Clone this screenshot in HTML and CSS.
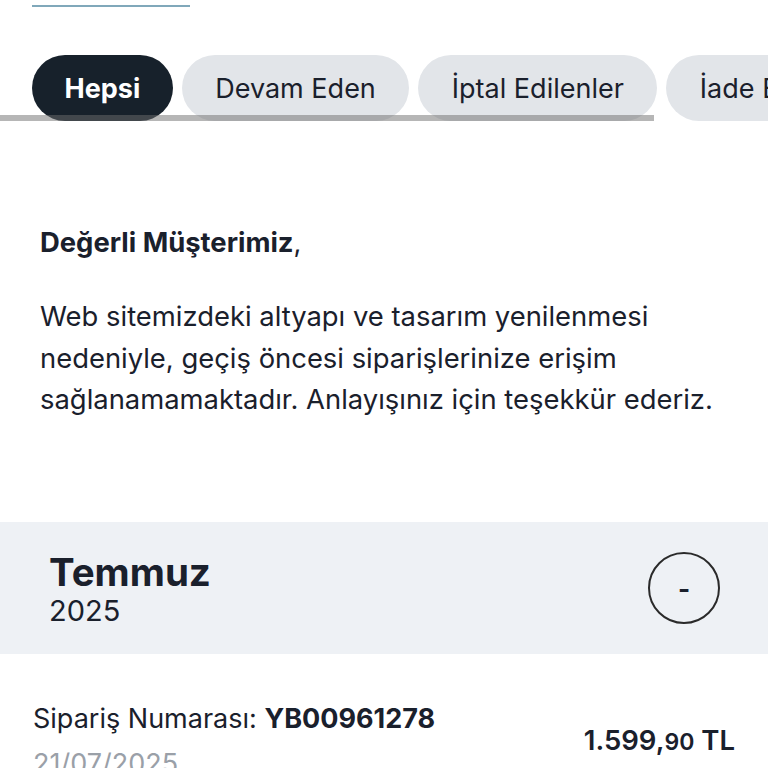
FILE: index.html
```html
<!DOCTYPE html>
<html lang="tr">
<head>
<meta charset="UTF-8">
<meta name="viewport" content="width=device-width, initial-scale=1.0">
<title>Siparişlerim</title>
<link rel="stylesheet" href="styles.css">
</head>
<body>

<div class="page">

 <div class="top-line"></div>

 <div class="tabs-wrap">
  <div class="tabs">
   <button class="tab tab-active">Hepsi</button>
   <button class="tab">Devam Eden</button>
   <button class="tab">İptal Edilenler</button>
   <button class="tab">İade Edilenler</button>
  </div>
  <div class="scroll-thumb"></div>
 </div>

 <div class="notice">
  <p class="notice-title"><b>Değerli Müşterimiz</b>,</p>
  <p class="notice-text">Web sitemizdeki altyapı ve tasarım yenilenmesi nedeniyle, geçiş öncesi siparişlerinize erişim sağlanamamaktadır. Anlayışınız için teşekkür ederiz.</p>
 </div>

 <div class="month">
  <div class="month-info">
   <div class="month-name">Temmuz</div>
   <div class="month-year">2025</div>
  </div>
  <button class="toggle">-</button>
 </div>

 <div class="order">
  <div class="order-info">
   <div class="order-no">Sipariş Numarası: <b>YB00961278</b></div>
   <div class="order-date">21/07/2025</div>
  </div>
  <div class="order-price">1.599,<span class="cents">90</span> TL</div>
 </div>

</div>

</body>
</html>
```

FILE: styles.css
```css
body, html {
 margin: 0;
 background-color: #fff;
 font-family: Inter, "Noto Sans", sans-serif;
 color: #1a202c;
 overflow: hidden;
}
.page {
 width: 768px;
 height: 768px;
 overflow: hidden;
}
.top-line {
 width: 158px;
 height: 2px;
 margin: 5px 0 0 32px;
 background-color: #80a8ba;
}
.tabs-wrap {
 position: relative;
 margin-top: 48px;
 overflow: hidden;
}
.tabs {
 display: flex;
 gap: 9px;
 padding-left: 32px;
 white-space: nowrap;
}
.tab {
 flex-shrink: 0;
 height: 66px;
 padding: 0 33.5px;
 border: none;
 border-radius: 33px;
 background-color: #e2e5e9;
 color: #1a202c;
 font-family: Inter, "Noto Sans", sans-serif;
 font-size: 27px;
}
.tab-active {
 background-color: #17212b;
 color: #fff;
 font-weight: 700;
 padding: 0 32.5px;
}
.scroll-thumb {
 position: absolute;
 left: 0;
 top: 60px;
 width: 654px;
 height: 7px;
 background-color: rgba(110, 110, 110, 0.5);
}
.notice {
 padding: 101px 40px 0 40px;
 height: 401px;
 box-sizing: border-box;
}
.notice p {
 margin: 0;
 font-size: 27.4px;
}
.notice-title {
 line-height: 40px;
}
.notice-text {
 margin-top: 34px !important;
 line-height: 41.5px;
 max-width: 690px;
}
.month {
 display: flex;
 justify-content: space-between;
 align-items: center;
 height: 132px;
 padding: 0 48px 0 49px;
 background-color: #eef1f5;
}
.month-info {
 padding-top: 2px;
}
.month-name {
 font-size: 38.5px;
 font-weight: 700;
 line-height: 44px;
}
.month-year {
 font-size: 29px;
 line-height: 34px;
}
.toggle {
 width: 72px;
 height: 72px;
 border: 2px solid #2a2a2a;
 border-radius: 50%;
 background: none;
 font-family: Inter, "Noto Sans", sans-serif;
 font-size: 26px;
 font-weight: 700;
 color: #1a202c;
 padding: 0;
}
.order {
 display: flex;
 justify-content: space-between;
 align-items: flex-start;
 padding: 47px 33px 0 33px;
}
.order-no {
 font-size: 27px;
 line-height: 36px;
}
.order-date {
 margin-top: 10px;
 font-size: 27px;
 color: #9aa0a8;
}
.order-price {
 font-size: 27.5px;
 font-weight: 600;
 margin-top: 22px;
}
.cents {
 font-size: 23px;
}
```
